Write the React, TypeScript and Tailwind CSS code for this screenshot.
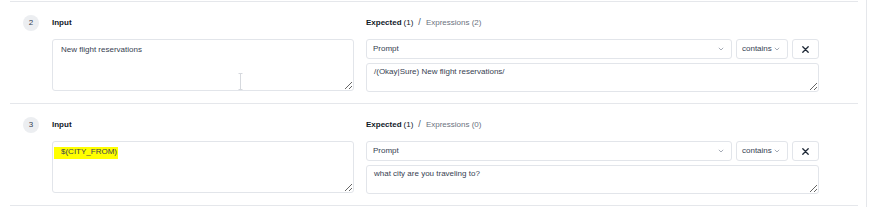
import React from "react";

const Chevron = () => (
  <svg width="6" height="4" viewBox="0 0 6 4" className="shrink-0">
    <path d="M0.8 0.8 L3 3 L5.2 0.8" fill="none" stroke="#9ca3af" strokeWidth="0.9" />
  </svg>
);

const XIcon = () => (
  <svg width="7" height="7" viewBox="0 0 7 7">
    <path d="M0.8 0.8 L6.2 6.2 M6.2 0.8 L0.8 6.2" stroke="#1f2937" strokeWidth="1.3" strokeLinecap="round" />
  </svg>
);

type RowProps = {
  n: number;
  input: string;
  highlight?: boolean;
  expressions: number;
  expected: string;
  cursor?: boolean;
};

const Row = ({ n, input, highlight, expressions, expected, cursor }: RowProps) => (
  <div className="flex h-[102px] border-t border-[#e5e7eb] pl-[13px] pt-[13px]">
    <div className="flex h-4 w-4 shrink-0 items-center justify-center rounded-full bg-[#eceef1] text-[8px] text-[#374151]">
      {n}
    </div>
    <div className="ml-[13px] grid grid-cols-[302px_453px] gap-x-[12px]">
      <div className="flex flex-col">
        <div className="flex h-4 items-center text-[8px] font-bold text-[#111827]">Input</div>
        <div className="relative mt-[8px] h-[52px]">
          {highlight && (
            <div className="absolute left-[2px] top-[6px] flex h-[12px] w-[64px] items-center bg-[#ffff00]" />
          )}
          <textarea
            className={`relative block h-[52px] w-full resize-y rounded-[3px] border border-[#e2e5ea] px-[8px] pt-[4px] text-[8px] leading-[12px] text-[#374151] outline-none ${highlight ? "bg-transparent" : "bg-white"}`}
            defaultValue={input}
          />
          {cursor && (
            <svg
              width="5"
              height="17"
              viewBox="0 0 5 17"
              className="pointer-events-none absolute left-[186px] top-[34px]"
            >
              <path d="M0.5 0.5 H4.5 M2.5 0.5 V16.5 M0.5 16.5 H4.5" stroke="#d6d9de" strokeWidth="1" fill="none" />
            </svg>
          )}
        </div>
      </div>
      <div className="flex flex-col">
        <div className="flex h-4 items-center text-[8px]">
          <span className="font-bold text-[#111827]">Expected</span>
          <span className="ml-[2px] text-[#111827]">(1)</span>
          <span className="mx-[5px] text-[9px] text-[#4b5563]">/</span>
          <span className="text-[#6b7280]">Expressions ({expressions})</span>
        </div>
        <div className="mt-[8px] flex h-[20px] gap-[4px]">
          <div className="flex w-[366px] items-center justify-between rounded-[3px] border border-[#e2e5ea] bg-white pl-[6px] pr-[7px] text-[8px] text-[#374151]">
            <span>Prompt</span>
            <Chevron />
          </div>
          <div className="flex w-[52px] items-center justify-between rounded-[3px] border border-[#e2e5ea] bg-white pl-[5px] pr-[7px] text-[8px] text-[#374151]">
            <span>contains</span>
            <Chevron />
          </div>
          <div className="flex w-[27px] items-center justify-center rounded-[3px] border border-[#e2e5ea] bg-white">
            <XIcon />
          </div>
        </div>
        <textarea
          className="mt-[4px] block h-[29px] w-full resize-y rounded-[3px] border border-[#e2e5ea] bg-white px-[7px] pt-[2px] text-[8px] leading-[12px] text-[#374151] outline-none"
          defaultValue={expected}
        />
      </div>
    </div>
  </div>
);

export default function App() {
  return (
    <div className="h-[207px] w-[870px] bg-white font-['Liberation_Sans',Arial,sans-serif]">
      <div className="h-[207px] w-[867px] border-r border-[#e5e7eb] pt-[1px]">
        <div className="ml-[10px] w-[848px] border-b border-[#e5e7eb]">
          <Row
            n={2}
            input="New flight reservations"
            expressions={2}
            expected="/(Okay|Sure) New flight reservations/"
            cursor
          />
          <Row
            n={3}
            input="$(CITY_FROM)"
            highlight
            expressions={0}
            expected="what city are you traveling to?"
          />
        </div>
      </div>
    </div>
  );
}
